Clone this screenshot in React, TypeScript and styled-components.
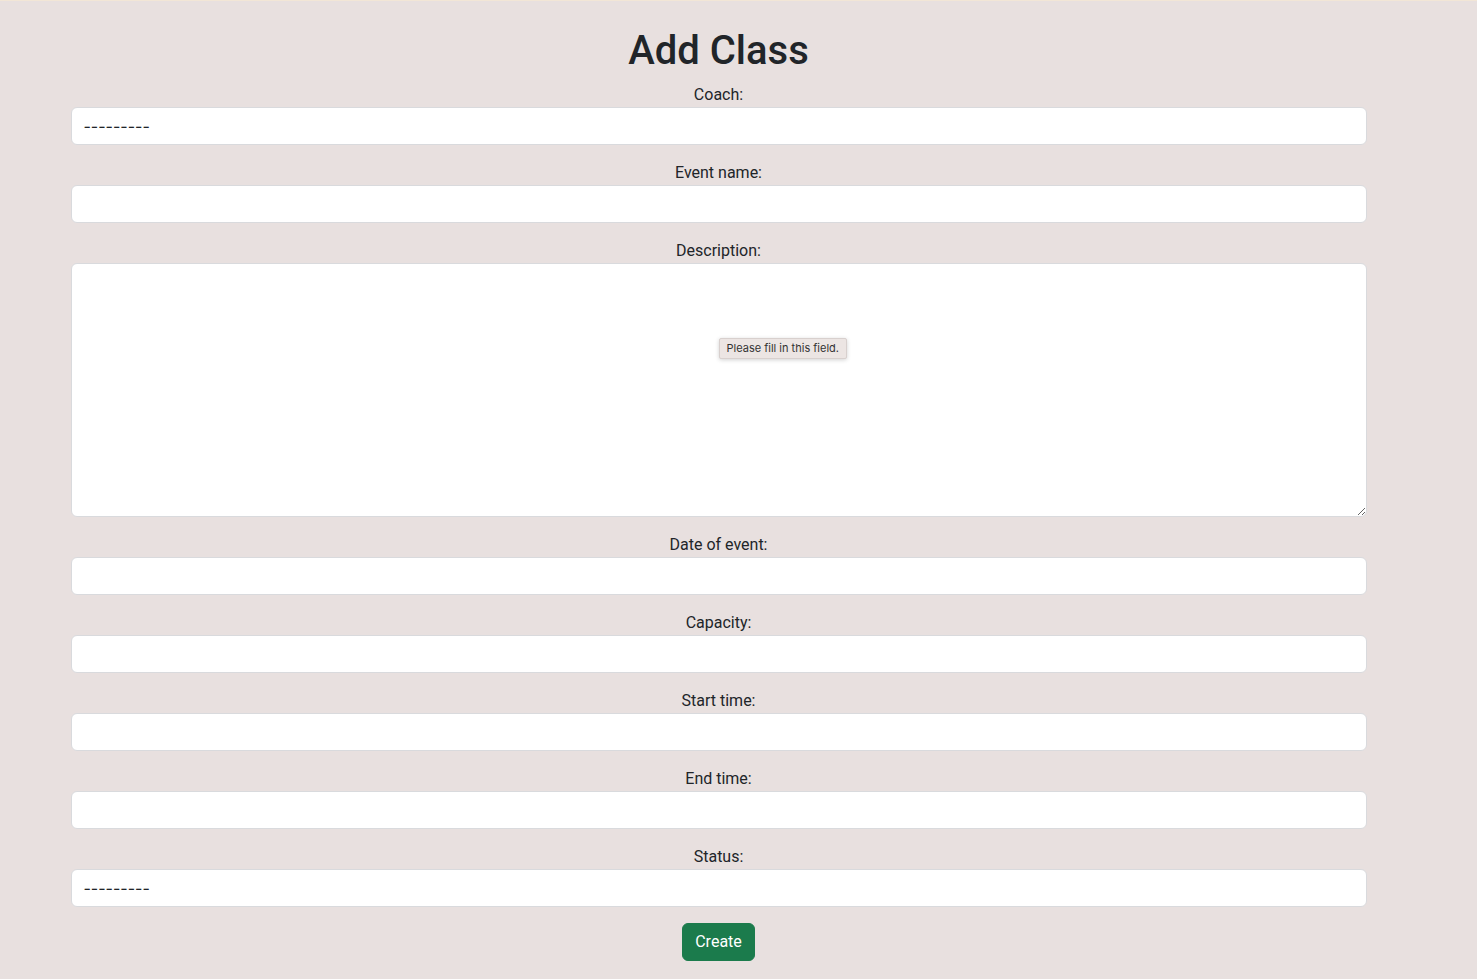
import React from "react";
import styled, { createGlobalStyle } from "styled-components";

const Global = createGlobalStyle`
  html, body { margin: 0; padding: 0; }
  body {
    background: #e8e0df;
    font-family: Roboto, "Liberation Sans", "Noto Sans", sans-serif;
    color: #212529;
    border-top: 1px solid #f2e6d6;
  }
`;

const Page = styled.main`
  display: flex;
  flex-direction: column;
  align-items: center;
  padding: 26px 0 19px;
  width: 1437px;
`;

const Title = styled.h1`
  margin: 0 0 8px;
  font-size: 40px;
  font-weight: 500;
  line-height: 48px;
`;

const Form = styled.form`
  width: 1296px;
  display: flex;
  flex-direction: column;
  align-items: center;
`;

const Group = styled.div`
  width: 100%;
  display: flex;
  flex-direction: column;
  align-items: center;
  margin-bottom: 16px;
  position: relative;
`;

const Label = styled.label`
  font-size: 16px;
  line-height: 24px;
`;

const fieldCss = `
  box-sizing: border-box;
  width: 100%;
  background: #fff;
  border: 1px solid #d9dadd;
  border-radius: 6px;
  font-family: inherit;
  font-size: 16px;
  color: #212529;
  padding: 6px 12px;
  outline: none;
`;

const Input = styled.input`
  ${fieldCss}
  height: 38px;
`;

const Select = styled.select`
  ${fieldCss}
  font-family: Inter, "Liberation Sans", sans-serif;
  height: 38px;
  appearance: none;
  -webkit-appearance: none;
`;

const TextArea = styled.textarea`
  ${fieldCss}
  height: 254px;
  resize: vertical;
  display: block;
`;

const Tooltip = styled.div`
  position: absolute;
  left: 648px;
  top: 99px;
  background: #ece5e3;
  border: 1px solid #d8d0ce;
  border-radius: 2px;
  box-shadow: 0 1px 4px rgba(0, 0, 0, 0.18);
  font-family: Inter, "Liberation Sans", sans-serif;
  font-size: 11px;
  line-height: 19px;
  padding: 0 7px;
  color: #333;
  white-space: nowrap;
`;

const Button = styled.button`
  background: #1b7b4c;
  color: #fff;
  border: 1px solid #1b7b4c;
  border-radius: 6px;
  font-family: inherit;
  font-size: 16px;
  line-height: 24px;
  padding: 6px 12px;
  cursor: pointer;
`;

const textFields = ["Date of event:", "Capacity:", "Start time:", "End time:"];

export default function App() {
  return (
    <>
      <Global />
      <Page>
        <Title>Add Class</Title>
        <Form onSubmit={(e) => e.preventDefault()}>
          <Group>
            <Label>Coach:</Label>
            <Select defaultValue="">
              <option value="">---------</option>
            </Select>
          </Group>
          <Group>
            <Label>Event name:</Label>
            <Input type="text" />
          </Group>
          <Group>
            <Label>Description:</Label>
            <TextArea />
            <Tooltip>Please fill in this field.</Tooltip>
          </Group>
          {textFields.map((label) => (
            <Group key={label}>
              <Label>{label}</Label>
              <Input type="text" />
            </Group>
          ))}
          <Group>
            <Label>Status:</Label>
            <Select defaultValue="">
              <option value="">---------</option>
            </Select>
          </Group>
          <Button type="submit">Create</Button>
        </Form>
      </Page>
    </>
  );
}
